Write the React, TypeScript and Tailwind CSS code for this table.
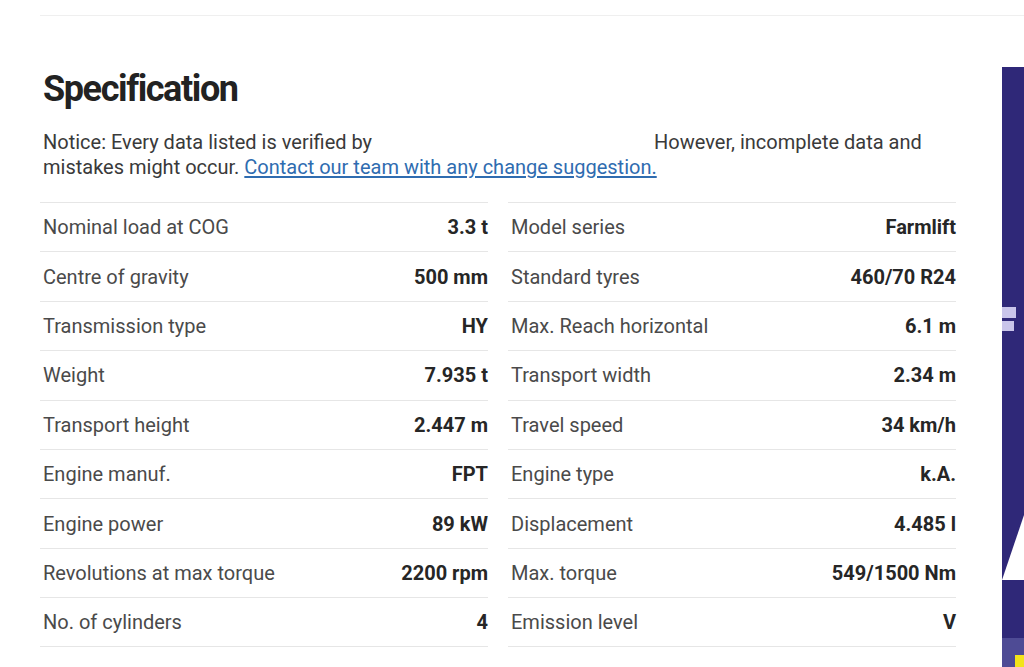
import React from "react";

type Spec = { label: string; value: string };

const rows: [Spec, Spec][] = [
  [{ label: "Nominal load at COG", value: "3.3 t" }, { label: "Model series", value: "Farmlift" }],
  [{ label: "Centre of gravity", value: "500 mm" }, { label: "Standard tyres", value: "460/70 R24" }],
  [{ label: "Transmission type", value: "HY" }, { label: "Max. Reach horizontal", value: "6.1 m" }],
  [{ label: "Weight", value: "7.935 t" }, { label: "Transport width", value: "2.34 m" }],
  [{ label: "Transport height", value: "2.447 m" }, { label: "Travel speed", value: "34 km/h" }],
  [{ label: "Engine manuf.", value: "FPT" }, { label: "Engine type", value: "k.A." }],
  [{ label: "Engine power", value: "89 kW" }, { label: "Displacement", value: "4.485 l" }],
  [{ label: "Revolutions at max torque", value: "2200 rpm" }, { label: "Max. torque", value: "549/1500 Nm" }],
  [{ label: "No. of cylinders", value: "4" }, { label: "Emission level", value: "V" }],
];

const SpecCell = ({ spec, last }: { spec: Spec; last: boolean }) => (
  <div
    className={
      "flex items-center justify-between h-[49.4px] pl-[3px] border-t border-[#e6e6e6]" +
      (last ? " border-b" : "")
    }
  >
    <span className="text-[20px] text-[#4a4a4a]">{spec.label}</span>
    <span className="text-[20px] font-bold text-[#262626]">{spec.value}</span>
  </div>
);

const SidePanel = () => (
  <div className="relative mt-[51px] h-[600px] flex-1 bg-[#2f2878] overflow-hidden">
    {/* bits of the next card peeking in */}
    <div className="absolute left-0 top-[240px] w-[14px] h-[11px] bg-[#c9c5ea]" />
    <div className="absolute left-0 top-[254px] w-[12px] h-[10px] bg-[#c9c5ea]" />
    <svg className="absolute left-0 top-[448px]" width="22" height="66" viewBox="0 0 22 66">
      <polygon points="0,65 22,0 22,65" fill="#ffffff" />
    </svg>
    <div className="absolute left-0 bottom-0 w-full h-[29px] bg-[#4e4b95]">
      <div className="absolute left-[13px] top-[17px] w-[9px] h-[12px] bg-[#f3e41a]" />
    </div>
  </div>
);

export default function App() {
  return (
    <div className="w-[1024px] h-[667px] bg-white overflow-hidden flex flex-col font-['Roboto',sans-serif]">
      <div className="ml-[40px] mt-[15px] border-t border-[#efefef]" />
      <div className="flex flex-1">
        <div className="w-[958px] pl-[40px] pt-[52px]">
          <h1 className="pl-[3px] text-[36px] leading-[43px] font-bold tracking-[-1.4px] text-[#222]">
            Specification
          </h1>
          <p className="mt-[19px] pl-[3px] text-[20px] leading-[25px] text-[#3a3a3a]">
            Notice: Every data listed is verified by
            <span className="inline-block w-[282px]" />
            However, incomplete data and
            <br />
            mistakes might occur.{" "}
            <a href="#" className="text-[#2f6cb0] underline underline-offset-2">
              Contact our team with any change suggestion.
            </a>
          </p>
          <div className="mt-[22px] grid grid-cols-[448px_448px] gap-x-[20px]">
            {rows.map(([a, b], i) => (
              <React.Fragment key={i}>
                <SpecCell spec={a} last={i === rows.length - 1} />
                <SpecCell spec={b} last={i === rows.length - 1} />
              </React.Fragment>
            ))}
          </div>
        </div>
        <div className="w-[44px]" />
        <SidePanel />
      </div>
    </div>
  );
}
